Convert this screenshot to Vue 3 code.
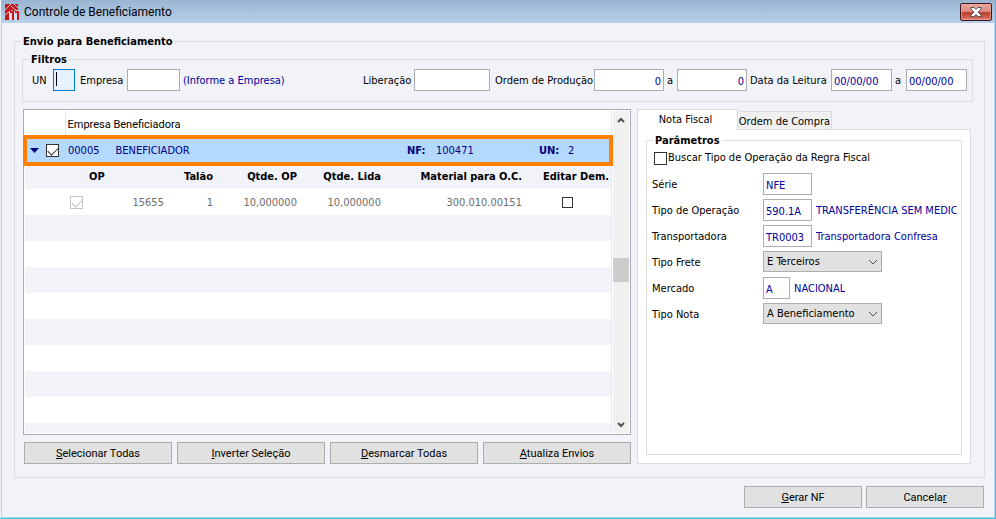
<script setup>
import { ref } from 'vue'

const filters = ref({ un: '', empresa: '', liberacao: '', opFrom: '0', opTo: '0', dateFrom: '00/00/00', dateTo: '00/00/00' })
const params = ref({ regra: false, serie: 'NFE', operacao: '590.1A', transportadora: 'TR0003', frete: 'E Terceiros', mercado: 'A', nota: 'A Beneficiamento' })
const companyChecked = ref(true)
const editDemand = ref(false)
const gridActions = [
  { key: 'S', rest: 'elecionar Todas' },
  { key: 'I', rest: 'nverter Seleção' },
  { key: 'D', rest: 'esmarcar Todas' },
  { key: 'A', rest: 'tualiza Envios' },
]
</script>

<template>
  <div class="window">
    <header class="titlebar">
      <svg class="logo" viewBox="0 0 14 16" aria-hidden="true">
        <path fill="#c8161d" d="M0 0h13v7H5v9H0z" />
        <path fill="none" stroke="#e6c3cc" d="M0 6l6-6M0 11l5-4M6 2l7 6M9 0l4 4" />
        <path fill="#d5dbe8" d="M4 8l3-2 2 2 2-2h3v10H4z" />
        <path fill="none" stroke="#c8161d" stroke-width="2" d="M5 8h3v8M10 8h3v8" />
      </svg>
      <h1>Controle de Beneficiamento</h1>
      <button class="close" type="button" aria-label="Fechar">
        <svg viewBox="0 0 12 10" aria-hidden="true">
          <path d="M1 .5h3l2 2 2-2h3v1.500L8 5l3 3v1.500H8l-2-2-2 2H1V8l3-3-3-3z" fill="#fff" stroke="#4c5260" />
        </svg>
      </button>
    </header>

    <main>
      <section class="shipment">
        <h2>Envio para Beneficiamento</h2>

        <fieldset class="filters">
          <legend>Filtros</legend>
          <div class="filter-row">
            <label for="un">UN</label>
            <input id="un" v-model="filters.un" class="active" type="text">
            <label for="empresa" class="pad">Empresa</label>
            <input id="empresa" v-model="filters.empresa" type="text">
            <span class="value hint">(Informe a Empresa)</span>
            <label for="liberacao">Liberação</label>
            <input id="liberacao" v-model="filters.liberacao" type="text">
            <label for="op-from" class="pad">Ordem de Produção</label>
            <input id="op-from" v-model="filters.opFrom" class="num" type="text">
            <label for="op-to">a</label>
            <input id="op-to" v-model="filters.opTo" class="num" type="text">
            <label for="date-from">Data da Leitura</label>
            <input id="date-from" v-model="filters.dateFrom" type="text">
            <label for="date-to">a</label>
            <input id="date-to" v-model="filters.dateTo" type="text">
          </div>
        </fieldset>

        <div class="columns">
          <div class="left">
            <div class="grid-box">
              <div class="grid-view">
                <table>
                  <colgroup>
                    <col class="c-toggle"><col class="c-check"><col><col class="c-talao">
                    <col class="c-qty"><col class="c-qty"><col class="c-material"><col class="c-edit">
                  </colgroup>
                  <thead>
                    <tr class="head">
                      <th></th>
                      <th colspan="7">Empresa Beneficiadora</th>
                    </tr>
                  </thead>
                  <tbody>
                    <tr class="company">
                      <td>
                        <div class="toggle">
                          <svg viewBox="0 0 9 5" aria-hidden="true"><path d="M0 0h9L4.500 5z" fill="#000080" /></svg>
                          <input v-model="companyChecked" type="checkbox" aria-label="Selecionar empresa">
                        </div>
                      </td>
                      <td colspan="5"><div class="name"><span>00005</span><span>BENEFICIADOR</span></div></td>
                      <td><div class="pair nf"><b>NF:</b><span>100471</span></div></td>
                      <td><div class="pair un"><b>UN:</b><span>2</span></div></td>
                    </tr>
                    <tr class="sub">
                      <th colspan="2"></th>
                      <th class="start">OP</th>
                      <th>Talão</th>
                      <th>Qtde. OP</th>
                      <th>Qtde. Lida</th>
                      <th>Material para O.C.</th>
                      <th>Editar Dem.</th>
                    </tr>
                    <tr class="order">
                      <td></td>
                      <td class="tick"><input type="checkbox" checked disabled aria-label="Selecionar OP"></td>
                      <td>15655</td>
                      <td>1</td>
                      <td>10,000000</td>
                      <td>10,000000</td>
                      <td>300.010.00151</td>
                      <td class="edit"><input v-model="editDemand" class="small" type="checkbox" aria-label="Editar Dem."></td>
                    </tr>
                  </tbody>
                </table>
              </div>
              <div class="scrollbar">
                <button type="button" aria-label="Rolar para cima">
                  <svg viewBox="0 0 8 6" aria-hidden="true"><path d="M1 5l3-3 3 3" /></svg>
                </button>
                <span class="track"></span>
                <span class="thumb"></span>
                <span class="track"></span>
                <button type="button" aria-label="Rolar para baixo">
                  <svg viewBox="0 0 8 6" aria-hidden="true"><path d="M1 1l3 3 3-3" /></svg>
                </button>
              </div>
            </div>
            <div class="grid-actions">
              <button v-for="a in gridActions" :key="a.key" class="btn" type="button"><u>{{ a.key }}</u>{{ a.rest }}</button>
            </div>
          </div>

          <div class="right">
            <div class="tabs" role="tablist">
              <button class="tab current" type="button" role="tab" aria-selected="true">Nota Fiscal</button>
              <button class="tab" type="button" role="tab" aria-selected="false">Ordem de Compra</button>
            </div>
            <div class="tab-panel" role="tabpanel">
              <fieldset class="params">
                <legend>Parâmetros</legend>
                <label class="rule"><input v-model="params.regra" type="checkbox">Buscar Tipo de Operação da Regra Fiscal</label>
                <div class="field">
                  <label for="serie">Série</label>
                  <input id="serie" v-model="params.serie" type="text">
                </div>
                <div class="field">
                  <label for="operacao">Tipo de Operação</label>
                  <input id="operacao" v-model="params.operacao" type="text">
                  <span class="value">TRANSFERÊNCIA SEM MEDIC</span>
                </div>
                <div class="field">
                  <label for="transp">Transportadora</label>
                  <input id="transp" v-model="params.transportadora" type="text">
                  <span class="value">Transportadora Confresa</span>
                </div>
                <div class="field">
                  <label for="frete">Tipo Frete</label>
                  <div class="select">
                    <select id="frete" v-model="params.frete"><option>E Terceiros</option></select>
                    <svg viewBox="0 0 10 6" aria-hidden="true"><path d="M1 1l4 4 4-4" /></svg>
                  </div>
                </div>
                <div class="field">
                  <label for="mercado">Mercado</label>
                  <input id="mercado" v-model="params.mercado" class="short" type="text">
                  <span class="value">NACIONAL</span>
                </div>
                <div class="field">
                  <label for="nota">Tipo Nota</label>
                  <div class="select">
                    <select id="nota" v-model="params.nota"><option>A Beneficiamento</option></select>
                    <svg viewBox="0 0 10 6" aria-hidden="true"><path d="M1 1l4 4 4-4" /></svg>
                  </div>
                </div>
              </fieldset>
            </div>
          </div>
        </div>
      </section>

      <footer>
        <button class="btn" type="button"><u>G</u>erar NF</button>
        <button class="btn" type="button">Cancela<u>r</u></button>
      </footer>
    </main>
  </div>
</template>

<style>
body {
  margin: 0;
}
</style>

<style scoped>
* {
  box-sizing: border-box;
}

.window {
  display: flex;
  flex-direction: column;
  min-height: 100vh;
  padding-left: 1px;
  background: #f2f3f9;
  border-right: 1px solid #30c8e8;
  border-bottom: 1px solid #20d0e8;
  color: #000;
  font: 11px/14px "DejaVu Sans Condensed", "Noto Sans", sans-serif;
}

button,
input,
select {
  margin: 0;
  font: inherit;
}

.titlebar {
  display: flex;
  align-items: center;
  height: 23px;
  padding: 0 3px 0 4px;
  background: linear-gradient(#99b4d1, #b9d1ea);
}

.logo {
  width: 14px;
  height: 16px;
}

h1 {
  flex: 1;
  margin: 0 0 0 5px;
  font: 12px/16px Roboto, sans-serif;
}

.close {
  display: grid;
  place-items: center;
  width: 32px;
  height: 18px;
  padding: 0;
  border: 1px solid #431422;
  border-radius: 2px;
  background: linear-gradient(#e9a79c, #d98a7c 48%, #b8402c 50%, #c4503a 70%, #d98070);
  box-shadow: inset 0 0 0 1px #f0b8ae80;
}

.close svg {
  width: 12px;
  height: 10px;
}

main {
  display: flex;
  flex: 1;
  flex-direction: column;
  padding: 18px 9px 9px 12px;
  border: 1px solid #b9d1ea;
  border-top: 0;
}

fieldset {
  min-width: 0;
  margin: 0;
  border: 1px solid #dcdcdc;
}

legend,
h2 {
  height: 14px;
  padding: 1px 2px 0;
  font-size: 11px;
  font-weight: bold;
  line-height: 14px;
}

.shipment {
  display: flex;
  flex: 1;
  flex-direction: column;
  padding: 0 11px 13px 7px;
  border: 1px solid #dcdcdc;
}

h2 {
  align-self: flex-start;
  margin: -8px 0 4px -1px;
  background: #f2f3f9;
}

.filters {
  margin-bottom: 7px;
  padding: 3px 5px 10px 6px;
}

.filter-row {
  display: grid;
  grid-template-columns: 24px 22px 52px 53px 1fr 51px 76px 104px 70px 13px 70px 84px 61px 14px 61px;
  align-items: center;
  white-space: nowrap;
}

.filter-row label,
.filter-row .hint {
  padding: 2px 0 0 3px;
}

.filter-row .pad {
  padding-left: 5px;
}

.filter-row label[for="liberacao"] {
  padding-left: 0;
}

.value {
  color: #0000a0;
}

input[type="text"] {
  width: 100%;
  height: 22px;
  padding: 2px 2px 0;
  border: 1px solid #abadb3;
  border-radius: 0;
  background: #fff;
  color: #0000a0;
}

input.active[type="text"] {
  border-color: #0078d7;
  background: #e5f1ff linear-gradient(#000, #000) 2px 2px / 1px 14px no-repeat;
}

input.num {
  text-align: right;
}

.columns {
  display: grid;
  flex: 1;
  grid-template-columns: minmax(0, 1fr) 334px;
  gap: 6px;
  padding: 0 2px 0 1px;
}

.left {
  display: flex;
  flex-direction: column;
  gap: 7px;
}

.grid-box {
  display: flex;
  flex: 1;
  padding: 1px;
  border: 1px solid #abadb3;
  background: #fff;
}

.grid-view {
  flex: 1;
  min-width: 0;
  border-right: 1px solid #e8e8ec;
  background: repeating-linear-gradient(#f2f3f9 0 26px, #fff 26px 52px);
}

table {
  width: 100%;
  table-layout: fixed;
  border-collapse: collapse;
}

.c-toggle {
  width: 40px;
}

.c-check {
  width: 22px;
}

.c-talao {
  width: 49px;
}

.c-qty {
  width: 84px;
}

.c-material {
  width: 141px;
}

.c-edit {
  width: 87px;
}

tr {
  height: 26px;
}

th,
td {
  padding: 2px 2px 0;
  text-align: right;
  white-space: nowrap;
}

.head th {
  background: #fff;
  font-family: Roboto, sans-serif;
  font-weight: normal;
  text-align: left;
}

.head th + th {
  border-left: 1px solid #e4e4e8;
}

.company {
  position: relative;
  background: #b3d9ff;
  color: #000080;
}

.company td {
  text-align: left;
}

.company td:first-child::after {
  position: absolute;
  inset: -2px -2px -3px;
  border: 4px solid #ff8000;
  content: "";
  pointer-events: none;
}

.company td:first-child,
.order .tick,
.order .edit {
  padding-top: 0;
}

.toggle {
  display: flex;
  align-items: center;
  gap: 7px;
  padding-left: 3px;
}

.toggle svg {
  width: 9px;
  height: 5px;
}

.name {
  display: flex;
  gap: 16px;
  padding-left: 1px;
}

.pair {
  display: flex;
}

.pair b {
  width: 29px;
}

.nf {
  padding-left: 22px;
}

.un {
  padding-left: 13px;
}

.sub {
  background: #f2f3f9;
}

.sub .start {
  text-align: left;
}

.order {
  background: #fff;
  color: #6d6d6d;
}

.order .tick,
.order .edit {
  text-align: center;
}

input[type="checkbox"] {
  display: inline-block;
  flex: none;
  width: 13px;
  height: 13px;
  border: 1px solid #333;
  background: #fff;
  appearance: none;
  vertical-align: middle;
}

input[type="checkbox"]:checked::after {
  display: block;
  width: 9px;
  height: 5px;
  margin: 2px 1px;
  border: solid #333;
  border-width: 0 0 1px 1px;
  content: "";
  transform: rotate(-45deg);
}

input[type="checkbox"]:disabled,
input[type="checkbox"]:disabled::after {
  border-color: #c4c4c4;
}

input.small[type="checkbox"] {
  width: 11px;
  height: 11px;
}

.scrollbar {
  display: flex;
  flex-direction: column;
  width: 16px;
  margin-left: 1px;
  background: #f0f0f0;
}

.scrollbar button {
  display: grid;
  place-items: center;
  height: 17px;
  padding: 0;
  border: 0;
  background: none;
}

.scrollbar svg {
  width: 8px;
  height: 6px;
  fill: none;
  stroke: #505050;
  stroke-width: 2;
}

.thumb {
  height: 24px;
  background: #cdcdcd;
}

.track {
  flex: 1;
}

.track:has(+ .thumb) {
  flex-grow: 0.97;
}

.grid-actions {
  display: grid;
  grid-template-columns: repeat(4, 1fr);
  gap: 5px;
  padding-left: 1px;
}

.btn {
  height: 22px;
  padding: 1px 0 0;
  border: 1px solid #adadad;
  background: #e1e1e1;
  color: #000;
  font: 11px/14px Roboto, sans-serif;
}

.right {
  display: flex;
  flex-direction: column;
}

.tabs {
  position: relative;
  z-index: 1;
  display: flex;
  align-items: flex-end;
  margin-bottom: -1px;
}

.tab {
  width: 94px;
  height: 19px;
  padding: 2px 0 0;
  border: 1px solid #dcdcdc;
  border-left: 0;
  background: #f0f0f0;
  color: #000;
  white-space: nowrap;
}

.tab.current {
  width: 101px;
  height: 21px;
  padding: 0 4px 0 0;
  border-bottom: 0;
  border-left: 1px solid #dcdcdc;
  background: #fff;
}

.tab-panel {
  display: flex;
  flex: 1;
  padding: 3px 8px 8px;
  border: 1px solid #dcdcdc;
  background: #fff;
}

.params {
  flex: 1;
  padding: 0 4px 8px 5px;
}

.params legend {
  margin-left: 1px;
}

.rule {
  display: flex;
  align-items: center;
  gap: 1px;
  height: 22px;
  margin-bottom: 4px;
  padding-left: 2px;
  white-space: nowrap;
}

.field {
  display: flex;
  align-items: flex-start;
  height: 22px;
  margin-bottom: 4px;
}

.field > label,
.field .value {
  padding-top: 5px;
}

.field > label {
  flex: none;
  width: 111px;
}

.field input[type="text"] {
  flex: none;
  width: 49px;
}

.field input.short[type="text"] {
  width: 27px;
}

.field .value {
  min-width: 0;
  margin-left: 4px;
  overflow: hidden;
  white-space: nowrap;
}

.select {
  position: relative;
  width: 119px;
}

select {
  display: block;
  width: 100%;
  height: 21px;
  padding: 1px 3px 0;
  border: 1px solid #adadad;
  border-radius: 0;
  background: #e1e1e1;
  color: #000;
  appearance: none;
}

.select svg {
  position: absolute;
  top: 8px;
  right: 4px;
  width: 10px;
  height: 6px;
  fill: none;
  stroke: #505050;
  pointer-events: none;
}

footer {
  display: flex;
  gap: 4px;
  justify-content: flex-end;
  padding: 8px 1px 0 0;
}

footer .btn {
  width: 118px;
}
</style>
